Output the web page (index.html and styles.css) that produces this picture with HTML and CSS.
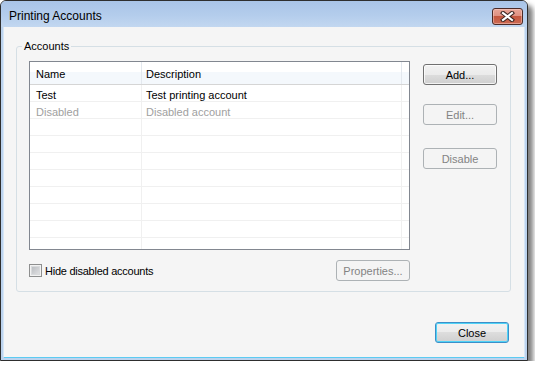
FILE: index.html
```html
<!DOCTYPE html>
<html>
<head>
    <meta charset="utf-8"/>
    <title>Printing Accounts</title>
    <link rel="stylesheet" href="styles.css">
</head>
<body>
<div class="window">
    <div class="titlebar">
        <span class="title">Printing Accounts</span>
        <button class="close-x" title="Close">
            <svg width="15" height="11" viewBox="0 0 15 11">
                <path d="M3 2 L12 9 M12 2 L3 9" stroke="#3a2420" stroke-width="4.2" stroke-linecap="square"/>
                <path d="M3 2 L12 9 M12 2 L3 9" stroke="#fff" stroke-width="2.2" stroke-linecap="square"/>
            </svg>
        </button>
    </div>
    <div class="client">
        <fieldset class="group">
            <legend>Accounts</legend>
            <div class="group-body">
                <div class="list-col">
                    <div class="listview">
                        <div class="lv-header">
                            <div class="cell name">Name</div>
                            <div class="cell desc">Description</div>
                            <div class="cell rest"></div>
                        </div>
                        <div class="lv-row">
                            <div class="cell name">Test</div>
                            <div class="cell desc">Test printing account</div>
                            <div class="cell rest"></div>
                        </div>
                        <div class="lv-row disabled">
                            <div class="cell name">Disabled</div>
                            <div class="cell desc">Disabled account</div>
                            <div class="cell rest"></div>
                        </div>
                        <div class="lv-row"><div class="cell name"></div><div class="cell desc"></div><div class="cell rest"></div></div>
                        <div class="lv-row"><div class="cell name"></div><div class="cell desc"></div><div class="cell rest"></div></div>
                        <div class="lv-row"><div class="cell name"></div><div class="cell desc"></div><div class="cell rest"></div></div>
                        <div class="lv-row"><div class="cell name"></div><div class="cell desc"></div><div class="cell rest"></div></div>
                        <div class="lv-row"><div class="cell name"></div><div class="cell desc"></div><div class="cell rest"></div></div>
                        <div class="lv-row"><div class="cell name"></div><div class="cell desc"></div><div class="cell rest"></div></div>
                        <div class="lv-row"><div class="cell name"></div><div class="cell desc"></div><div class="cell rest"></div></div>
                        <div class="lv-row"><div class="cell name"></div><div class="cell desc"></div><div class="cell rest"></div></div>
                    </div>
                    <div class="list-footer">
                        <label class="check"><span class="box"></span>Hide disabled accounts</label>
                        <button class="btn" disabled>Properties...</button>
                    </div>
                </div>
                <div class="side-buttons">
                    <button class="btn">Add...</button>
                    <button class="btn btn-edit" disabled>Edit...</button>
                    <button class="btn btn-disable" disabled>Disable</button>
                </div>
            </div>
        </fieldset>
        <div class="footer">
            <button class="btn default">Close</button>
        </div>
    </div>
</div>
</body>
</html>
```

FILE: styles.css
```css
html,
body {
    margin: 0;
    padding: 0;
    background: #fff;
}

body {
    font-family: "Liberation Sans", Arial, sans-serif;
    font-size: 11px;
    color: #000;
}

.window {
    width: 526px;
    height: 359px;
    border: 1px solid #2e2e2e;
    border-radius: 6px 6px 0 0;
    background: #bcd3ee;
    box-shadow: 5px 5px 5px rgba(0, 0, 0, 0.5);
    display: flex;
    flex-direction: column;
}

.titlebar {
    height: 26px;
    display: flex;
    align-items: flex-start;
    border-radius: 5px 5px 0 0;
    background: linear-gradient(to bottom, #a9c4e7, #b4cdec 55%, #c2d7f0);
}

.titlebar .title {
    font-size: 12px;
    line-height: 14px;
    margin: 8px 0 0 8px;
}

.close-x {
    margin: 7px 4px 0 auto;
    width: 31px;
    height: 17px;
    box-sizing: border-box;
    padding: 0;
    border: 1px solid #4b2a26;
    border-radius: 3px;
    background: linear-gradient(to bottom, #e8a597, #de8f80 50%, #c4573f 50%, #cc6a53);
    box-shadow: inset 0 0 0 1px rgba(255, 220, 210, 0.45);
    display: flex;
    align-items: center;
    justify-content: center;
}

.client {
    flex: 1;
    margin: 0 3px 3px;
    background: #f5f5f5;
    box-shadow: 0 1px 0 #5ccbf2, -1px 0 0 #d6e6f6, 1px 0 0 #d6e6f6;
    display: flex;
    flex-direction: column;
}

.group {
    margin: 12px 13px 0 12px;
    padding: 8px 12px 10px;
    border: 1px solid #d5dfe5;
    border-radius: 3px;
    min-width: 0;
}

.group legend {
    line-height: 14px;
    padding: 0 2px;
    margin-left: -7px;
}

.group-body {
    display: flex;
    gap: 13px;
}

.list-col {
    width: 381px;
}

.listview {
    height: 189px;
    box-sizing: border-box;
    border: 1px solid #828790;
    background: #fff;
    overflow: hidden;
}

.lv-header,
.lv-row {
    display: flex;
    box-sizing: border-box;
}

.lv-header {
    height: 23px;
    border-bottom: 1px solid #d5d5d5;
    background: linear-gradient(to bottom, #fff 0, #fff 45%, #f4f8fc 45%, #f4f8fc 100%);
}

.lv-row {
    height: 17px;
    flex-shrink: 0;
    border-bottom: 1px solid #f0f0f0;
}

.cell {
    box-sizing: border-box;
    line-height: 13px;
    padding-top: 4px;
    white-space: nowrap;
}

.lv-header .cell {
    padding-top: 6px;
}

.cell.name {
    width: 112px;
    padding-left: 6px;
    border-right: 1px solid #f0f0f0;
}

.cell.desc {
    width: 260px;
    padding-left: 4px;
    border-right: 1px solid #f0f0f0;
}

.lv-header .cell.name,
.lv-header .cell.desc {
    border-right-color: #e3e8ee;
}

.cell.rest {
    flex: 1;
}

.lv-row.disabled {
    color: #a0a0a0;
}

.list-footer {
    margin-top: 10px;
    display: flex;
    align-items: center;
    justify-content: space-between;
}

.check {
    display: flex;
    align-items: center;
    gap: 3px;
    letter-spacing: -0.25px;
}

.check .box {
    width: 13px;
    height: 13px;
    box-sizing: border-box;
    border: 1px solid #8e8f8f;
    background: linear-gradient(135deg, #b1b5ba, #e8e8e9);
    box-shadow: inset 0 0 0 1px #f2f2f2, inset 0 0 0 2px #d8dadc;
}

.btn {
    width: 74px;
    height: 21px;
    box-sizing: border-box;
    padding: 0;
    border: 1px solid #707070;
    border-radius: 3px;
    background: linear-gradient(to bottom, #f2f2f2 0, #ebebeb 50%, #dddddd 50%, #cfcfcf 100%);
    box-shadow: inset 0 0 0 1px rgba(255, 255, 255, 0.75);
    font-family: inherit;
    font-size: 11px;
    color: #000;
}

.btn:disabled {
    border-color: #adb2b5;
    background: #f4f4f4;
    color: #838383;
    box-shadow: none;
}

.btn.default {
    border-color: #3c8fc8;
    box-shadow: inset 0 0 0 1px #4fd3f7;
}

.side-buttons {
    width: 74px;
    padding-top: 3px;
    display: flex;
    flex-direction: column;
}

.side-buttons .btn-edit {
    margin-top: 19px;
}

.side-buttons .btn-disable {
    margin-top: 23px;
}

.footer {
    margin-top: auto;
    display: flex;
    justify-content: flex-end;
    padding: 0 15px 14px 0;
}
```
